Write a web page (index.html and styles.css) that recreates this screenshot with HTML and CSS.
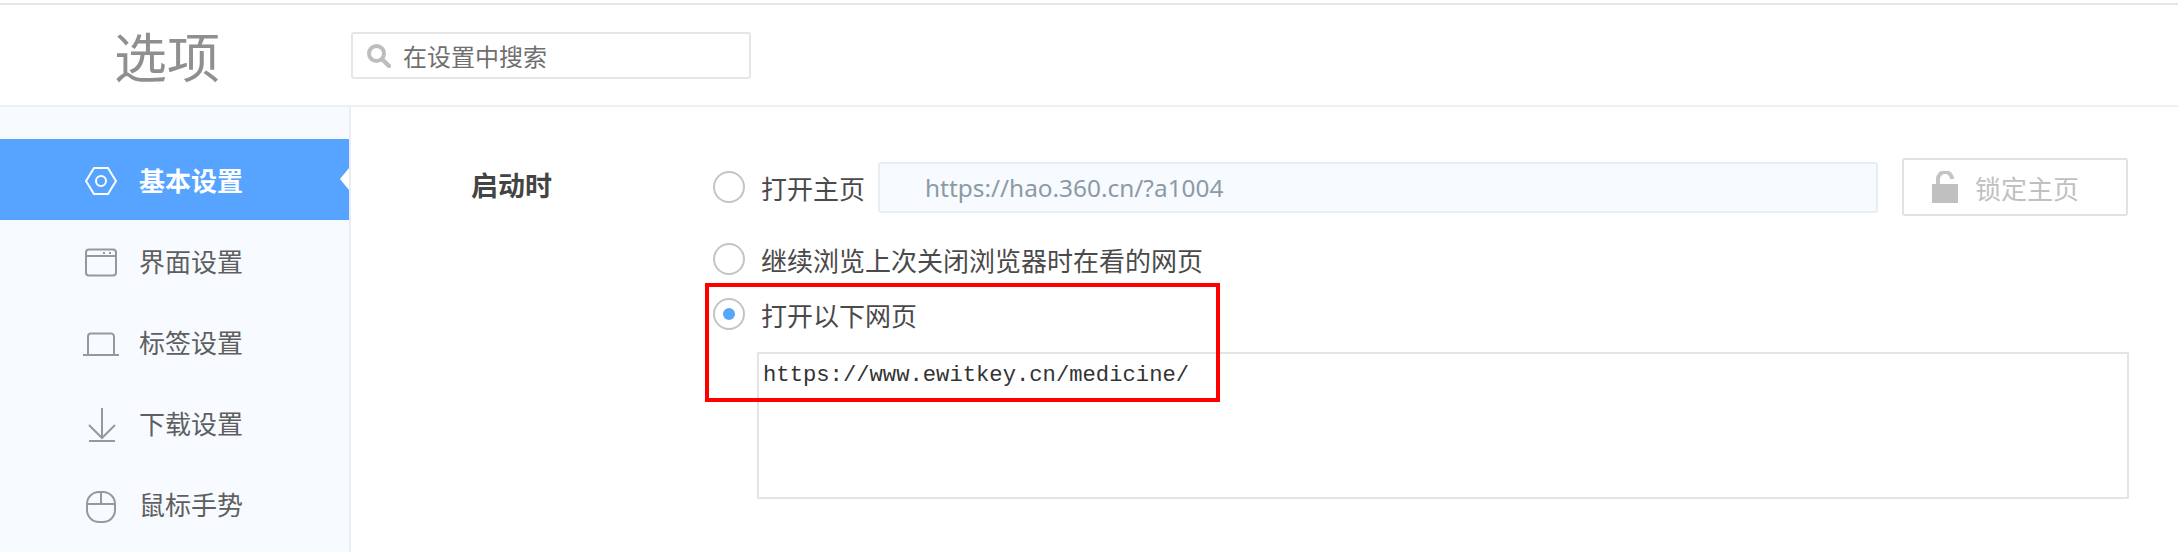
FILE: index.html
```html
<!DOCTYPE html>
<html lang="zh-CN">
<head>
<meta charset="utf-8">
<title>选项</title>
<link rel="stylesheet" href="styles.css">
</head>
<body>
<div class="top-line"></div>
<header class="header">
  <h1 class="title">选项</h1>
  <div class="search">
    <svg class="search-icon" viewBox="0 0 24 24" width="24" height="24"><circle cx="9.5" cy="9.5" r="7.5" fill="none" stroke="#bdbdbd" stroke-width="4"/><path d="M15 15l7 7" stroke="#bdbdbd" stroke-width="4.5" stroke-linecap="round"/></svg>
    <span class="search-text">在设置中搜索</span>
  </div>
</header>
<div class="main">
  <nav class="sidebar">
    <div class="item active">
      <span class="slot"><svg viewBox="0 0 32 32" width="32" height="32"><path d="M9 4h14l8 13-8 13H9L1 17z" fill="none" stroke="#fff" stroke-width="2"/><circle cx="16" cy="17" r="5" fill="none" stroke="#fff" stroke-width="2"/></svg></span>
      <span>基本设置</span>
    </div>
    <div class="item">
      <span class="slot"><svg viewBox="0 0 32 32" width="32" height="32"><rect x="1" y="4.5" width="30" height="26" rx="3" fill="none" stroke="#96999c" stroke-width="2"/><path d="M1 11h30" stroke="#96999c" stroke-width="2"/><path d="M18 8h2M24 8h2" stroke="#96999c" stroke-width="2"/></svg></span>
      <span>界面设置</span>
    </div>
    <div class="item">
      <span class="slot slot-wide"><svg viewBox="0 0 36 32" width="36" height="32"><path d="M5 28V10.500a3 3 0 0 1 3-3h20a3 3 0 0 1 3 3V28" fill="none" stroke="#96999c" stroke-width="2"/><path d="M0 29h36" stroke="#96999c" stroke-width="2"/></svg></span>
      <span>标签设置</span>
    </div>
    <div class="item">
      <span class="slot slot-down"><svg viewBox="0 0 34 34" width="34" height="34"><path d="M17 0v30M4 17l13 13 13-13" fill="none" stroke="#96999c" stroke-width="2"/><path d="M4 33h26" stroke="#96999c" stroke-width="2"/></svg></span>
      <span>下载设置</span>
    </div>
    <div class="item">
      <span class="slot slot-mouse"><svg viewBox="0 0 32 32" width="32" height="32"><rect x="2" y="1" width="28" height="30" rx="12" fill="none" stroke="#96999c" stroke-width="2"/><path d="M2 13h28M16 1v12" fill="none" stroke="#96999c" stroke-width="2"/></svg></span>
      <span>鼠标手势</span>
    </div>
  </nav>
  <section class="content">
    <div class="label">启动时</div>
    <div class="options">
      <div class="row row-home">
        <span class="radio"></span>
        <span class="text">打开主页</span>
        <div class="home-input">https://hao.360.cn/?a1004</div>
        <div class="lock-btn">
          <svg class="lock" viewBox="0 0 26 32" width="26" height="32"><path d="M6 13V8a7 7 0 0 1 14 0" fill="none" stroke="#c4c4c4" stroke-width="4"/><rect x="0" y="13" width="26" height="19" fill="#c0c0c0"/></svg>
          <span>锁定主页</span>
        </div>
      </div>
      <div class="row row-continue">
        <span class="radio"></span>
        <span class="text">继续浏览上次关闭浏览器时在看的网页</span>
      </div>
      <div class="row row-pages">
        <span class="radio checked"></span>
        <span class="text">打开以下网页</span>
      </div>
      <div class="pages-box">https://www.ewitkey.cn/medicine/</div>
      <div class="red-box"></div>
    </div>
  </section>
</div>
</body>
</html>
```

FILE: styles.css
```css
* { box-sizing: border-box; }
html, body { margin: 0; height: 100%; background: #fff; overflow: hidden; }
body {
  font-family: "Noto Sans CJK SC", "Noto Sans", sans-serif;
  color: #555;
  display: flex;
  flex-direction: column;
  height: 552px;
}
.top-line { height: 5px; border-top: 3px solid #fff; border-bottom: 2px solid #e6e6e6; flex: none; }
.header {
  height: 102px;
  flex: none;
  display: flex;
  align-items: center;
  border-bottom: 2px solid #eeeff1;
}
.title {
  margin: 0 0 0 114px;
  width: 237px;
  font-size: 53px;
  font-weight: 400;
  color: #8f8f8f;
  line-height: 60px;
}
.search {
  width: 400px;
  height: 47px;
  border: 2px solid #e6e6e6;
  border-radius: 3px;
  display: flex;
  align-items: center;
  padding-left: 14px;
  margin-top: 1px;
}
.search-icon { margin-right: 12px; flex: none; }
.search-text { font-size: 24px; color: #6f6f6f; line-height: 30px; }
.main { flex: 1; display: flex; min-height: 0; }
.sidebar {
  width: 351px;
  flex: none;
  background: #f7fbff;
  border-right: 2px solid #e9edf1;
  padding-top: 32px;
}
.item {
  height: 81px;
  display: flex;
  align-items: center;
  font-size: 26px;
  color: #5f5f5f;
  position: relative;
  padding-left: 85px;
}
.slot { width: 54px; flex: none; display: flex; align-items: center; }
.slot-wide { margin-left: -2px; width: 56px; }
.slot-down { margin-top: 5px; }
.slot-mouse { margin-top: 7px; }
.item.active { background: #56a4ff; color: #fff; font-weight: 700; width: 349px; }
.item.active::after {
  content: "";
  position: absolute;
  right: 0;
  top: 29px;
  border-top: 11px solid transparent;
  border-bottom: 11px solid transparent;
  border-right: 9px solid #fff;
}
.content { flex: 1; position: relative; display: flex; }
.label {
  margin: 58px 0 0 120px;
  width: 242px;
  font-size: 27px;
  font-weight: 700;
  color: #444;
  line-height: 40px;
  flex: none;
}
.options { position: relative; flex: none; width: 1416px; }
.row { display: flex; align-items: center; }
.row-home { margin-top: 51px; height: 58px; }
.row-continue { margin-top: 26px; height: 34px; }
.row-pages { margin-top: 21px; height: 34px; }
.radio {
  width: 32px;
  height: 32px;
  border-radius: 50%;
  border: 2px solid #c4c4c4;
  background: #fff;
  flex: none;
  display: flex;
  align-items: center;
  justify-content: center;
  margin-right: 16px;
}
.radio.checked::before {
  content: "";
  width: 12px;
  height: 12px;
  border-radius: 50%;
  background: #5aa7fa;
}
.text { font-size: 26px; color: #4a4a4a; line-height: 34px; white-space: nowrap; padding-top: 1px; }
.home-input {
  width: 1000px;
  height: 51px;
  margin-left: 13px;
  background: #f7fbff;
  border: 2px solid #e6edf3;
  border-radius: 3px;
  padding-left: 45px;
  font-family: "Noto Sans", "Open Sans", sans-serif;
  font-size: 24.4px;
  color: #8c9aa5;
  line-height: 47px;
  flex: none;
}
.lock-btn {
  width: 226px;
  height: 58px;
  margin-left: 24px;
  border: 2px solid #e2e2e2;
  border-radius: 3px;
  display: flex;
  align-items: center;
  padding-left: 28px;
  gap: 17px;
  font-size: 26px;
  color: #c0c0c0;
  flex: none;
}
.pages-box {
  margin: 21px 0 0 44px;
  width: 1372px;
  height: 147px;
  border: 2px solid #e4e4e4;
  padding: 7px 0 0 4px;
  font-family: "Liberation Mono", monospace;
  font-size: 22.2px;
  line-height: 30px;
  color: #333;
}
.red-box {
  position: absolute;
  left: -8px;
  top: 176px;
  width: 515px;
  height: 119px;
  border: 4px solid #f00;
  pointer-events: none;
}
```
